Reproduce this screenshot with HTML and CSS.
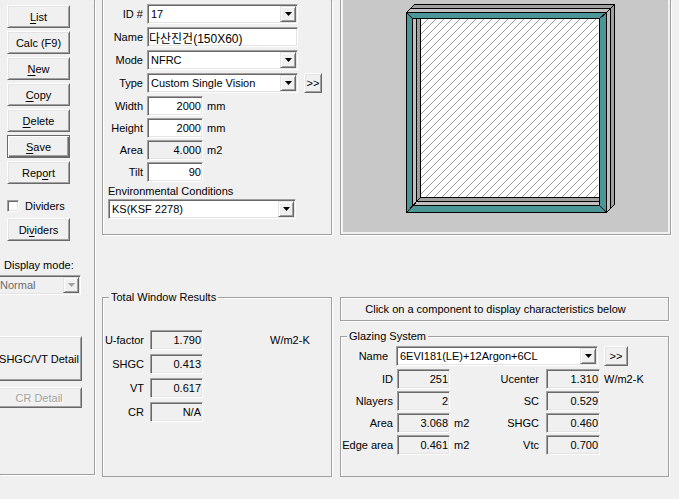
FILE: index.html
```
<!DOCTYPE html>
<html lang="en">
<head>
<meta charset="utf-8">
<title>Window</title>
<link rel="stylesheet" href="styles.css">
</head>
<body>
<main class="app">
  <aside class="sidebar">
    <div class="commands">
      <button class="button"><u>L</u>ist</button>
      <button class="button">Calc (F9)</button>
      <button class="button"><u>N</u>ew</button>
      <button class="button"><u>C</u>opy</button>
      <button class="button"><u>D</u>elete</button>
      <button class="button default"><u>S</u>ave</button>
      <button class="button">Rep<u>o</u>rt</button>
    </div>
    <div class="dividers">
      <label class="check"><input type="checkbox">Dividers</label>
      <button class="button">Di<u>v</u>iders</button>
    </div>
    <div class="display">
      <label for="display-mode">Display mode:</label>
      <span class="combo disabled">
        <select id="display-mode" disabled><option>Normal</option></select>
        <span class="arrow"></span>
      </span>
    </div>
    <div class="details">
      <button class="button tall">SHGC/VT Detail</button>
      <button class="button short" disabled>CR Detail</button>
    </div>
  </aside>

  <div class="column inputs">
    <section class="panel top-panel">
      <div class="form">
        <label for="id">ID #</label>
        <span class="combo"><select id="id"><option>17</option></select><span class="arrow"></span></span>
        <label for="name">Name</label>
        <input id="name" type="text" value="다산진건(150X60)">
        <label for="mode">Mode</label>
        <span class="combo"><select id="mode"><option>NFRC</option></select><span class="arrow"></span></span>
        <label for="type">Type</label>
        <span class="combo"><select id="type"><option>Custom Single Vision</option></select><span class="arrow"></span></span>
        <button class="button more">&gt;&gt;</button>
      </div>
      <div class="form sizes">
        <label for="width">Width</label>
        <input id="width" class="number" type="text" value="2000"><span>mm</span>
        <label for="height">Height</label>
        <input id="height" class="number" type="text" value="2000"><span>mm</span>
        <label for="area">Area</label>
        <input id="area" class="number" type="text" value="4.000" readonly><span>m2</span>
        <label for="tilt">Tilt</label>
        <input id="tilt" class="number" type="text" value="90">
      </div>
      <div class="environment">
        <label for="env">Environmental Conditions</label>
        <span class="combo"><select id="env"><option>KS(KSF 2278)</option></select><span class="arrow"></span></span>
      </div>
    </section>

    <fieldset class="panel results">
      <legend>Total Window Results</legend>
      <div class="form">
        <label for="ufactor">U-factor</label>
        <input id="ufactor" class="number" type="text" value="1.790" readonly><span>W/m2-K</span>
        <label for="shgc">SHGC</label>
        <input id="shgc" class="number" type="text" value="0.413" readonly>
        <label for="vt">VT</label>
        <input id="vt" class="number" type="text" value="0.617" readonly>
        <label for="cr">CR</label>
        <input id="cr" class="number" type="text" value="N/A" readonly>
      </div>
    </fieldset>
  </div>

  <div class="column preview">
    <section class="panel top-panel drawing">
      <div class="canvas">
        <svg width="225" height="232" viewBox="393 0 225 232" shape-rendering="crispEdges" role="img" aria-label="Window preview">
          <defs>
            <clipPath id="pane"><path d="M421 19H598V197H421Z"/></clipPath>
            <pattern id="hatch" width="8" height="8" patternUnits="userSpaceOnUse">
              <path fill="#999" d="M0 6h1v1h-1zM1 5h1v1h-1zM2 4h1v1h-1zM3 3h1v1h-1zM4 2h1v1h-1zM5 1h1v1h-1zM6 0h1v1h-1zM7 7h1v1h-1z"/>
            </pattern>
          </defs>
          <path fill="#a0a0a0" d="M406 12L414 4H615V204L607 212Z"/>
          <path fill="#c0c0c0" d="M406 12L410 8H611V208L607 212Z"/>
          <path fill="#4b9696" d="M406 12H607V213H406Z"/>
          <path fill="#c0c0c0" d="M412 18H599V206H412Z"/>
          <path fill="#a0a0a0" d="M416 18H599V202H416Z"/>
          <path fill="#fff" d="M420 18H599V198H420Z"/>
          <path fill="url(#hatch)" clip-path="url(#pane)" d="M421 19H598V197H421Z"/>
          <g fill="none" stroke="#000">
            <path d="M406.500 12.500H606.500V212.500H406.500Z"/>
            <path d="M412.500 18.500H599.500V205.500H412.500Z"/>
            <path d="M416.500 18.500V201.500H599.500M420.500 18.500V197.500H599.500"/>
            <path d="M406.500 12.500L414.500 4.500H614.500V204.500L606.500 212.500"/>
            <path d="M410.500 8.500H610.500V208.500M606.500 12.500L614.500 4.500"/>
            <path d="M406.500 12.500L412.500 18.500M606.500 12.500L599.500 18.500M599.500 205.500L606.500 212.500M406.500 212.500L420.500 197.500"/>
          </g>
        </svg>
      </div>
    </section>

    <div class="panel hint">Click on a component to display characteristics below</div>

    <fieldset class="panel glazing">
      <legend>Glazing System</legend>
      <div class="glazing-name">
        <label for="gname">Name</label>
        <span class="combo"><select id="gname"><option>6EVI181(LE)+12Argon+6CL</option></select><span class="arrow"></span></span>
        <button class="button">&gt;&gt;</button>
      </div>
      <div class="glazing-values">
        <label for="gid">ID</label>
        <input id="gid" class="number" type="text" value="251" readonly><span></span>
        <label for="ucenter">Ucenter</label>
        <input id="ucenter" class="number" type="text" value="1.310" readonly><span>W/m2-K</span>
        <label for="nlayers">Nlayers</label>
        <input id="nlayers" class="number" type="text" value="2" readonly><span></span>
        <label for="sc">SC</label>
        <input id="sc" class="number" type="text" value="0.529" readonly><span></span>
        <label for="garea">Area</label>
        <input id="garea" class="number" type="text" value="3.068" readonly><span>m2</span>
        <label for="gshgc">SHGC</label>
        <input id="gshgc" class="number" type="text" value="0.460" readonly><span></span>
        <label for="edge">Edge area</label>
        <input id="edge" class="number" type="text" value="0.461" readonly><span>m2</span>
        <label for="vtc">Vtc</label>
        <input id="vtc" class="number" type="text" value="0.700" readonly><span></span>
      </div>
    </fieldset>
  </div>
</main>
</body>
</html>
```
FILE: styles.css
```
* { box-sizing: border-box; }

body {
  margin: 0;
  background: #f0f0f0;
  color: #000;
  overflow: hidden;
}

body, button, input, select {
  font: 11px/16px "Liberation Sans", "Noto Sans CJK KR", sans-serif;
}

.app {
  display: flex;
  align-items: flex-start;
  padding-right: 8px;
}

/* Raised and sunken edges */
.button {
  height: 23px;
  padding: 0;
  border: 1px solid;
  border-color: #fff #696969 #696969 #fff;
  background: #f0f0f0;
  box-shadow: inset 1px 1px #e3e3e3, inset -1px -1px #a0a0a0;
  color: #000;
  white-space: nowrap;
}

.button.default {
  border-color: #696969;
  box-shadow: inset 1px 1px #fff, inset -1px -1px #696969, inset -2px -2px #a0a0a0;
}

.button:disabled {
  color: #a0a0a0;
  text-shadow: 1px 1px #fff;
}

.button u { text-underline-offset: 2px; }

input[type="text"], .combo {
  height: 20px;
  min-width: 0;
  border: 1px solid;
  border-color: #a0a0a0 #fff #fff #a0a0a0;
  background: #fff;
  box-shadow: inset 1px 1px #696969, inset -1px -1px #e3e3e3;
}

input[type="text"] {
  width: 100%;
  padding: 0 1px;
  outline: 0;
}

#name { font-size: 12px; }

input.number { text-align: right; }

input[readonly][type="text"] { background: #f0f0f0; }

.combo {
  position: relative;
  display: block;
}

.combo select {
  display: block;
  width: 100%;
  height: 18px;
  padding: 0 18px 0 3px;
  border: 0;
  background: transparent;
  appearance: none;
  color: #000;
  outline: 0;
}

.arrow {
  position: absolute;
  top: 1px;
  right: 1px;
  display: flex;
  align-items: flex-start;
  justify-content: flex-start;
  width: 16px;
  height: 16px;
  padding: 5px 0 0 4px;
  border: 1px solid;
  border-color: #e3e3e3 #696969 #696969 #e3e3e3;
  background: #f0f0f0;
  box-shadow: inset 1px 1px #fff, inset -1px -1px #a0a0a0;
  pointer-events: none;
}

.arrow::before {
  content: "";
  width: 7px;
  height: 4px;
  background: #000;
  clip-path: polygon(0 0, 100% 0, 50% 100%);
}

.combo.disabled { background: #f0f0f0; }
.combo.disabled select { color: #6d6d6d; opacity: 1; }
.combo.disabled .arrow::before { background: #a0a0a0; }

.panel {
  min-width: 0;
  margin: 0;
  padding: 0;
  border: 1px solid #a0a0a0;
  box-shadow: 1px 1px #fff, inset 1px 1px #fff;
}

.top-panel {
  height: 235px;
  border-top: 0;
  box-shadow: 1px 1px #fff, inset 1px 0 #fff;
}

legend {
  margin-left: 6px;
  padding: 0 2px;
  background: #f0f0f0;
}

/* Command bar */
.sidebar {
  flex: 0 0 95px;
  min-width: 0;
  height: 475px;
  padding-top: 5px;
  border: solid #a0a0a0;
  border-width: 0 1px 1px 0;
  box-shadow: 1px 1px #fff;
}

.commands, .dividers {
  display: flex;
  flex-direction: column;
  gap: 3px;
  padding: 0 24px 0 7px;
}

.dividers {
  gap: 4px;
  margin-top: 14px;
}

.check {
  display: flex;
  align-items: center;
  gap: 6px;
}

.check input {
  width: 12px;
  height: 12px;
  margin: 0;
  border: 1px solid;
  border-color: #a0a0a0 #fff #fff #a0a0a0;
  background: #fff;
  box-shadow: inset 1px 1px #696969, inset -1px -1px #e3e3e3;
  appearance: none;
}

.display { margin: 16px 13px 0 -4px; }
.display label { display: block; margin: 0 0 2px 8px; white-space: nowrap; }

.details {
  display: flex;
  flex-direction: column;
  gap: 6px;
  margin: 41px 12px 0 -4px;
}

.button.tall { height: 45px; }
.button.short { height: 21px; }

/* Data columns */
.inputs { flex: 230 1 0; margin-left: 7px; }
.preview { flex: 331 1 0; margin-left: 8px; }
.column { min-width: 0; }

.form {
  display: grid;
  grid-template-columns: 40px 151px 20px;
  gap: 3px 4px;
  align-items: center;
  padding-top: 4px;
}

.form label, .glazing-name label, .glazing-values label {
  grid-column: 1;
  text-align: right;
  white-space: nowrap;
}

.more { height: 20px; margin-left: 2px; }

.sizes {
  grid-template-columns: 40px 56px auto;
  row-gap: 2px;
  padding-top: 3px;
}

.environment { padding: 1px 35px 0 5px; }
.environment label { display: block; }

.results {
  height: 188px;
  margin-top: 54px;
}

.results .form {
  grid-template-columns: 41px 53px auto;
  gap: 4px 6px;
  padding-top: 25px;
}

.results .form span { padding-left: 61px; }

.canvas {
  display: flex;
  justify-content: center;
  height: 232px;
  margin: 0 2px;
  background: #c8c8c8;
}

.hint {
  margin: 62px 2px 0 0;
  padding: 3px 18px 3px 0;
  text-align: center;
  white-space: nowrap;
}

.glazing {
  height: 149px;
  margin: 7px 2px 0 0;
}

.glazing-name {
  display: grid;
  grid-template-columns: 47px minmax(0, 204px) 24px;
  column-gap: 6px;
  align-items: center;
  padding-top: 2px;
}

.glazing-name .combo { margin-left: 2px; }
.glazing-name .button { height: 20px; }

.glazing-values {
  display: grid;
  grid-template-columns: 52px 53px 17px 67px 54px auto;
  gap: 2px 4px;
  align-items: center;
  padding-top: 3px;
}

.glazing-values label:nth-of-type(even) { grid-column: 4; padding-right: 3px; }
.glazing-values span { white-space: nowrap; }
```
